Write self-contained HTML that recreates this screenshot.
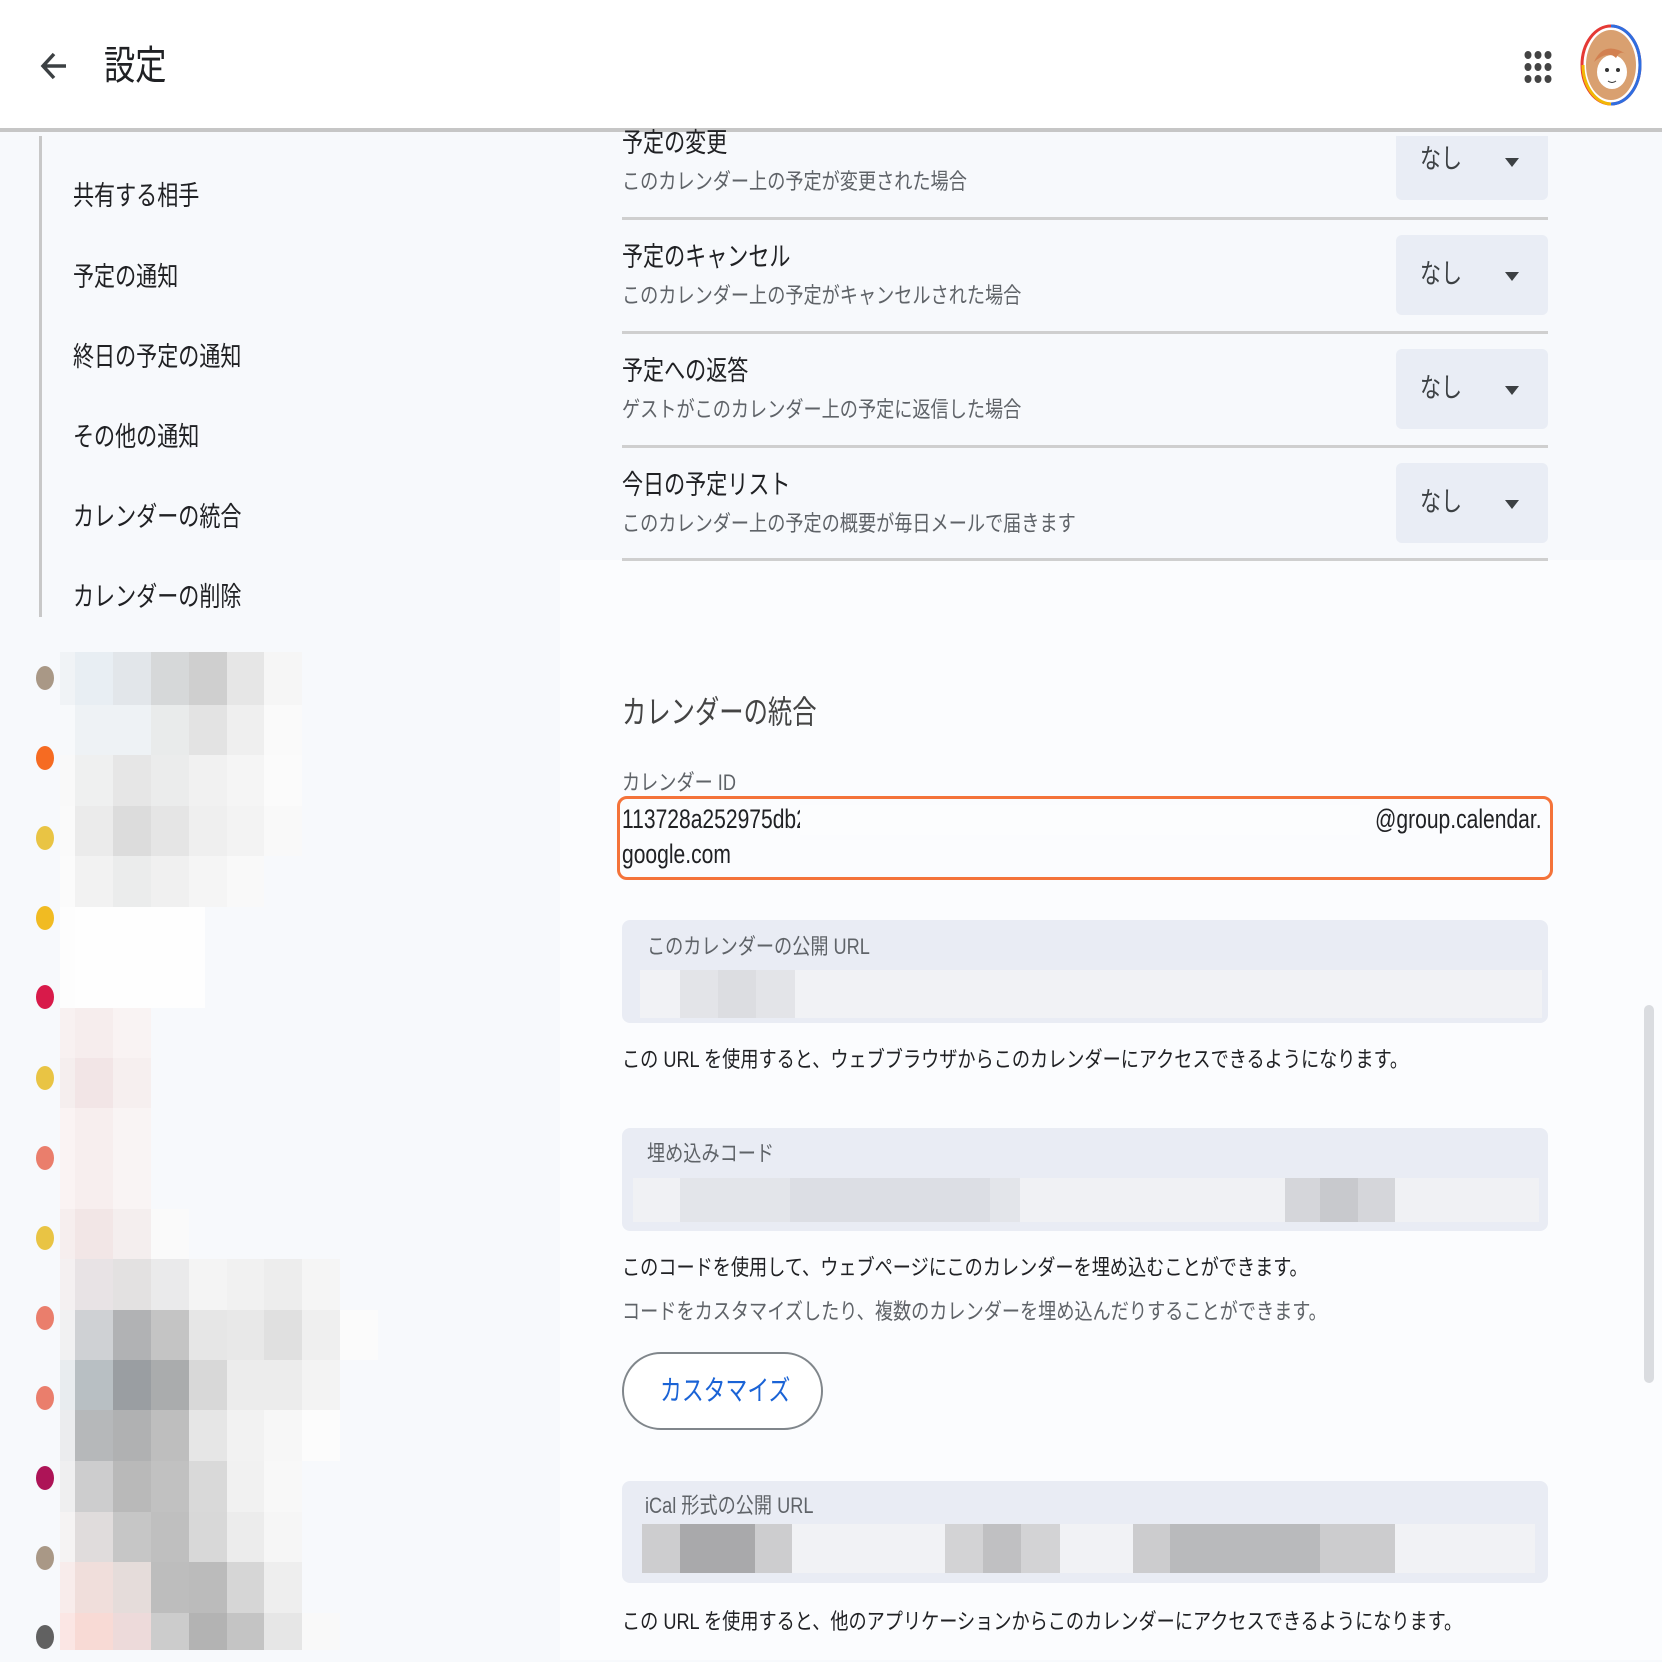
<!DOCTYPE html>
<html><head><meta charset="utf-8"><style>
*{margin:0;padding:0;box-sizing:border-box}
body{width:1662px;height:1662px;overflow:hidden;background:#f7f9fc;font-family:"Liberation Sans","Noto Sans CJK JP",sans-serif;position:relative;color:#3c4043}
.a{position:absolute}
.t{position:absolute;white-space:nowrap;transform:scaleX(.78);transform-origin:left top;line-height:1}
.s{transform:scaleX(.825)}
.hdr{position:absolute;left:0;top:0;width:1662px;height:132px;background:#fff;border-bottom:4px solid #c6c6c6}
.dd{position:absolute;left:1396px;width:152px;background:#e9edf5;border-radius:6px}
.dd .t{left:24px;font-size:27px;color:#3c4043}
.dd .tri{position:absolute;left:109px;width:0;height:0;border-left:7px solid transparent;border-right:7px solid transparent;border-top:9px solid #3c4043}
.hr{position:absolute;left:622px;width:926px;height:3px;background:#cfcfcf}
.dot{position:absolute;left:36px;width:18px;height:24px;border-radius:50%}
.row{position:absolute;left:60px;display:flex}
.row div{height:100%}
.box{position:absolute;left:622px;width:926px;background:#e9ecf4;border-radius:8px}
</style></head><body>
<div class="a" style="left:560px;top:560px;width:1102px;height:1100px;background:#fbfcfe"></div>
<div class="hdr"></div>
<svg class="a" style="left:38px;top:46px" width="32" height="40" viewBox="0 0 32 40"><path d="M28 20H6M16 8L5 20l11 12" fill="none" stroke="#3c4043" stroke-width="3.5"/></svg>
<div class="t" style="left:104px;top:46px;font-size:40px;color:#202124">設定</div>
<svg class="a" style="left:1524px;top:50px" width="28" height="34" viewBox="0 0 28 34"><g fill="#444"><ellipse cx="4" cy="5" rx="3.5" ry="4"/><ellipse cx="14" cy="5" rx="3.5" ry="4"/><ellipse cx="24" cy="5" rx="3.5" ry="4"/><ellipse cx="4" cy="17" rx="3.5" ry="4"/><ellipse cx="14" cy="17" rx="3.5" ry="4"/><ellipse cx="24" cy="17" rx="3.5" ry="4"/><ellipse cx="4" cy="29" rx="3.5" ry="4"/><ellipse cx="14" cy="29" rx="3.5" ry="4"/><ellipse cx="24" cy="29" rx="3.5" ry="4"/></g></svg>
<svg class="a" style="left:1580px;top:24px" width="62" height="82" viewBox="0 0 62 82"><ellipse cx="31" cy="41" rx="29" ry="39" fill="none" stroke="#e53935" stroke-width="3"/><path d="M31 2A29 39 0 0 1 60 41A29 39 0 0 1 31 80" fill="none" stroke="#2f6ee0" stroke-width="3"/><path d="M3 41A29 39 0 0 0 31 80" fill="none" stroke="#f2b705" stroke-width="3"/><ellipse cx="31" cy="41" rx="25" ry="35" fill="#d9a070"/><ellipse cx="32" cy="48" rx="15" ry="17" fill="#fff"/><path d="M14 38q10-22 32-8q-6-4-10 4q-8-8-22 4z" fill="#d28050"/><circle cx="27" cy="46" r="2" fill="#333"/><circle cx="38" cy="46" r="2" fill="#333"/><path d="M28 57q4 3 8 0" stroke="#333" fill="none"/></svg>

<div class="a" style="left:39px;top:136px;width:3px;height:481px;background:#c8c8c8"></div>
<div class="t" style="left:73px;top:183px;font-size:27px;color:#202124">共有する相手</div>
<div class="t" style="left:73px;top:264px;font-size:27px;color:#202124">予定の通知</div>
<div class="t" style="left:73px;top:344px;font-size:27px;color:#202124">終日の予定の通知</div>
<div class="t" style="left:73px;top:424px;font-size:27px;color:#202124">その他の通知</div>
<div class="t" style="left:73px;top:504px;font-size:27px;color:#202124">カレンダーの統合</div>
<div class="t" style="left:73px;top:584px;font-size:27px;color:#202124">カレンダーの削除</div>

<div class="row" style="top:652px;height:53px"><div style="width:15px;background:#f0f3f6"></div><div style="width:38px;background:#e8eef3"></div><div style="width:38px;background:#e2e6ea"></div><div style="width:38px;background:#d6d8d9"></div><div style="width:38px;background:#cfcfcf"></div><div style="width:37px;background:#e6e6e6"></div><div style="width:38px;background:#f6f6f6"></div></div>
<div class="row" style="top:705px;height:50px"><div style="width:15px;background:#f7f9fb"></div><div style="width:38px;background:#eef2f5"></div><div style="width:38px;background:#eef2f5"></div><div style="width:38px;background:#e9ebeb"></div><div style="width:38px;background:#e3e3e3"></div><div style="width:37px;background:#efefef"></div><div style="width:38px;background:#fafafa"></div></div>
<div class="row" style="top:755px;height:51px"><div style="width:15px;background:#f9f9f9"></div><div style="width:38px;background:#eff0f0"></div><div style="width:38px;background:#e6e6e6"></div><div style="width:38px;background:#ebecec"></div><div style="width:38px;background:#f1f1f1"></div><div style="width:37px;background:#f5f5f5"></div><div style="width:38px;background:#fbfbfb"></div></div>
<div class="row" style="top:806px;height:50px"><div style="width:15px;background:#fafafa"></div><div style="width:38px;background:#ebebeb"></div><div style="width:38px;background:#dcdcdc"></div><div style="width:38px;background:#e5e5e5"></div><div style="width:38px;background:#efefef"></div><div style="width:37px;background:#f3f3f3"></div><div style="width:38px;background:#f9f9f9"></div></div>
<div class="row" style="top:856px;height:51px"><div style="width:15px;background:#fbfbfb"></div><div style="width:38px;background:#f2f2f2"></div><div style="width:38px;background:#ebecec"></div><div style="width:38px;background:#f0f0f0"></div><div style="width:38px;background:#f5f5f5"></div><div style="width:37px;background:#f9f9f9"></div></div>
<div class="row" style="top:907px;height:101px"><div style="width:15px;background:#fdfdfd"></div><div style="width:130px;background:#fefefe"></div></div>
<div class="row" style="top:1008px;height:50px"><div style="width:15px;background:#f8f1f1"></div><div style="width:38px;background:#f6eded"></div><div style="width:38px;background:#f9f3f3"></div></div>
<div class="row" style="top:1058px;height:50px"><div style="width:15px;background:#f5eeee"></div><div style="width:38px;background:#f2e5e6"></div><div style="width:38px;background:#f6efef"></div></div>
<div class="row" style="top:1108px;height:101px"><div style="width:15px;background:#faf3f3"></div><div style="width:38px;background:#f7eeee"></div><div style="width:38px;background:#f9f4f4"></div></div>
<div class="row" style="top:1209px;height:50px"><div style="width:15px;background:#f6eeee"></div><div style="width:38px;background:#f2e6e6"></div><div style="width:38px;background:#f4eeee"></div><div style="width:38px;background:#fafafa"></div></div>
<div class="row" style="top:1259px;height:51px"><div style="width:15px;background:#f4f0f1"></div><div style="width:38px;background:#e8e3e5"></div><div style="width:38px;background:#e3e1e1"></div><div style="width:38px;background:#eaeaeb"></div><div style="width:38px;background:#f4f4f4"></div><div style="width:37px;background:#f1f1f1"></div><div style="width:38px;background:#ededed"></div><div style="width:38px;background:#f5f5f5"></div></div>
<div class="row" style="top:1310px;height:50px"><div style="width:15px;background:#f1f1f2"></div><div style="width:38px;background:#cfd1d4"></div><div style="width:38px;background:#b1b2b4"></div><div style="width:38px;background:#c4c4c4"></div><div style="width:38px;background:#e6e6e6"></div><div style="width:37px;background:#e8e8e8"></div><div style="width:38px;background:#e0e0e0"></div><div style="width:38px;background:#efefef"></div><div style="width:38px;background:#fbfbfb"></div></div>
<div class="row" style="top:1360px;height:50px"><div style="width:15px;background:#e8ecef"></div><div style="width:38px;background:#b8bfc3"></div><div style="width:38px;background:#9a9ea2"></div><div style="width:38px;background:#aaacad"></div><div style="width:38px;background:#d8d8d8"></div><div style="width:37px;background:#ececec"></div><div style="width:38px;background:#ececec"></div><div style="width:38px;background:#f3f3f3"></div></div>
<div class="row" style="top:1410px;height:51px"><div style="width:15px;background:#ebecee"></div><div style="width:38px;background:#b6b8ba"></div><div style="width:38px;background:#b0b1b2"></div><div style="width:38px;background:#bebebe"></div><div style="width:38px;background:#e6e6e6"></div><div style="width:37px;background:#f2f2f2"></div><div style="width:38px;background:#f7f7f7"></div><div style="width:38px;background:#fcfcfc"></div></div>
<div class="row" style="top:1461px;height:51px"><div style="width:15px;background:#efeff0"></div><div style="width:38px;background:#cdcdce"></div><div style="width:38px;background:#b9b9b9"></div><div style="width:38px;background:#c1c1c1"></div><div style="width:38px;background:#d9d9d9"></div><div style="width:37px;background:#f1f1f1"></div><div style="width:38px;background:#f8f8f8"></div></div>
<div class="row" style="top:1512px;height:50px"><div style="width:15px;background:#f5f3f3"></div><div style="width:38px;background:#e0dcdc"></div><div style="width:38px;background:#c6c6c6"></div><div style="width:38px;background:#bfbfbf"></div><div style="width:38px;background:#d8d8d8"></div><div style="width:37px;background:#ececec"></div><div style="width:38px;background:#f6f6f6"></div></div>
<div class="row" style="top:1562px;height:51px"><div style="width:15px;background:#f8eceb"></div><div style="width:38px;background:#f0dedb"></div><div style="width:38px;background:#e5dcda"></div><div style="width:38px;background:#bdbdbd"></div><div style="width:38px;background:#bbbbbb"></div><div style="width:37px;background:#d6d6d6"></div><div style="width:38px;background:#eeeeee"></div></div>
<div class="row" style="top:1613px;height:37px"><div style="width:15px;background:#fbe6e4"></div><div style="width:38px;background:#f8dad5"></div><div style="width:38px;background:#eddada"></div><div style="width:38px;background:#cccccc"></div><div style="width:38px;background:#b3b3b3"></div><div style="width:37px;background:#c4c4c4"></div><div style="width:38px;background:#e6e6e6"></div><div style="width:38px;background:#f9f9f9"></div></div>

<div class="dot" style="top:666px;background:#a99886"></div>
<div class="dot" style="top:746px;background:#f66b22"></div>
<div class="dot" style="top:826px;background:#e9c444"></div>
<div class="dot" style="top:906px;background:#f1bb22"></div>
<div class="dot" style="top:985px;background:#d81a4a"></div>
<div class="dot" style="top:1066px;background:#e9c444"></div>
<div class="dot" style="top:1146px;background:#ea7e6c"></div>
<div class="dot" style="top:1226px;background:#e9c444"></div>
<div class="dot" style="top:1306px;background:#ea7e6c"></div>
<div class="dot" style="top:1386px;background:#ea7e6c"></div>
<div class="dot" style="top:1466px;background:#ad1457"></div>
<div class="dot" style="top:1546px;background:#a99886"></div>
<div class="dot" style="top:1625px;background:#616161"></div>

<div class="dd" style="top:136px;height:64px;border-radius:0 0 6px 6px"><div class="t" style="top:10px">なし</div><div class="tri" style="top:22px"></div></div>
<div class="t" style="left:622px;top:130px;font-size:27px;color:#202124">予定の変更</div>
<div class="t s" style="left:622px;top:171px;font-size:22px;color:#5f6368">このカレンダー上の予定が変更された場合</div>
<div class="hr" style="top:217px"></div>

<div class="dd" style="top:235px;height:80px"><div class="t" style="top:26px">なし</div><div class="tri" style="top:37px"></div></div>
<div class="t" style="left:622px;top:244px;font-size:27px;color:#202124">予定のキャンセル</div>
<div class="t s" style="left:622px;top:285px;font-size:22px;color:#5f6368">このカレンダー上の予定がキャンセルされた場合</div>
<div class="hr" style="top:331px"></div>

<div class="dd" style="top:349px;height:80px"><div class="t" style="top:26px">なし</div><div class="tri" style="top:37px"></div></div>
<div class="t" style="left:622px;top:358px;font-size:27px;color:#202124">予定への返答</div>
<div class="t s" style="left:622px;top:399px;font-size:22px;color:#5f6368">ゲストがこのカレンダー上の予定に返信した場合</div>
<div class="hr" style="top:445px"></div>

<div class="dd" style="top:463px;height:80px"><div class="t" style="top:26px">なし</div><div class="tri" style="top:37px"></div></div>
<div class="t" style="left:622px;top:472px;font-size:27px;color:#202124">今日の予定リスト</div>
<div class="t s" style="left:622px;top:513px;font-size:22px;color:#5f6368">このカレンダー上の予定の概要が毎日メールで届きます</div>
<div class="hr" style="top:558px"></div>

<div class="t" style="left:622px;top:696px;font-size:32px;color:#444;transform:scaleX(.76)">カレンダーの統合</div>
<div class="t s" style="left:622px;top:772px;font-size:22px;color:#5f6368">カレンダー ID</div>
<div class="a" style="left:617px;top:796px;width:936px;height:84px;border:3px solid #f4733a;border-radius:10px"></div>
<div class="t" style="left:622px;top:806px;font-size:27px;color:#202124">113728a252975db2</div>
<div class="a" style="left:800px;top:805px;width:560px;height:30px;background:#fcfdfe"></div>
<div class="t" style="left:1375px;top:806px;font-size:27px;color:#202124">@group.calendar.</div>
<div class="t" style="left:622px;top:841px;font-size:27px;color:#202124">google.com</div>

<div class="box" style="top:920px;height:103px"></div>
<div class="t s" style="left:647px;top:936px;font-size:22px;color:#5f6368">このカレンダーの公開 URL</div>
<div class="a" style="left:640px;top:970px;width:902px;height:48px;background:#f1f2f5"></div>
<div class="a" style="left:680px;top:970px;width:115px;height:48px;background:#e3e4e8"></div>
<div class="a" style="left:718px;top:970px;width:38px;height:48px;background:#dcdde1"></div>
<div class="t s" style="left:622px;top:1049px;font-size:22px;color:#202124">この URL を使用すると、ウェブブラウザからこのカレンダーにアクセスできるようになります。</div>

<div class="box" style="top:1128px;height:103px"></div>
<div class="t s" style="left:647px;top:1143px;font-size:22px;color:#5f6368">埋め込みコード</div>
<div class="a" style="left:633px;top:1178px;width:906px;height:44px;background:#f0f1f4"></div>
<div class="a" style="left:680px;top:1178px;width:340px;height:44px;background:#e3e5ea"></div>
<div class="a" style="left:790px;top:1178px;width:200px;height:44px;background:#dcdee4"></div>
<div class="a" style="left:1285px;top:1178px;width:110px;height:44px;background:#d5d6da"></div>
<div class="a" style="left:1320px;top:1178px;width:38px;height:44px;background:#c8c9cd"></div>
<div class="t s" style="left:622px;top:1257px;font-size:22px;color:#202124">このコードを使用して、ウェブページにこのカレンダーを埋め込むことができます。</div>
<div class="t s" style="left:622px;top:1301px;font-size:22px;color:#5f6368">コードをカスタマイズしたり、複数のカレンダーを埋め込んだりすることができます。</div>

<div class="a" style="left:622px;top:1352px;width:201px;height:78px;border:2px solid #80868b;border-radius:40px;background:#fff"></div>
<div class="t" style="left:660px;top:1377px;font-size:28px;color:#1a63d6">カスタマイズ</div>

<div class="box" style="top:1481px;height:102px"></div>
<div class="t s" style="left:645px;top:1495px;font-size:22px;color:#5f6368">iCal 形式の公開 URL</div>
<div class="a" style="left:642px;top:1524px;width:893px;height:49px;background:#f1f2f5"></div>
<div class="a" style="left:642px;top:1524px;width:150px;height:49px;background:#cdcdcf"></div>
<div class="a" style="left:680px;top:1524px;width:75px;height:49px;background:#a9a9ab"></div>
<div class="a" style="left:945px;top:1524px;width:115px;height:49px;background:#d3d3d5"></div>
<div class="a" style="left:983px;top:1524px;width:38px;height:49px;background:#c0c0c2"></div>
<div class="a" style="left:1133px;top:1524px;width:262px;height:49px;background:#ccccce"></div>
<div class="a" style="left:1170px;top:1524px;width:150px;height:49px;background:#b9babc"></div>
<div class="t s" style="left:622px;top:1611px;font-size:22px;color:#202124">この URL を使用すると、他のアプリケーションからこのカレンダーにアクセスできるようになります。</div>

<div class="a" style="left:1644px;top:1005px;width:10px;height:378px;background:#dadce0;border-radius:5px"></div>
</body></html>
